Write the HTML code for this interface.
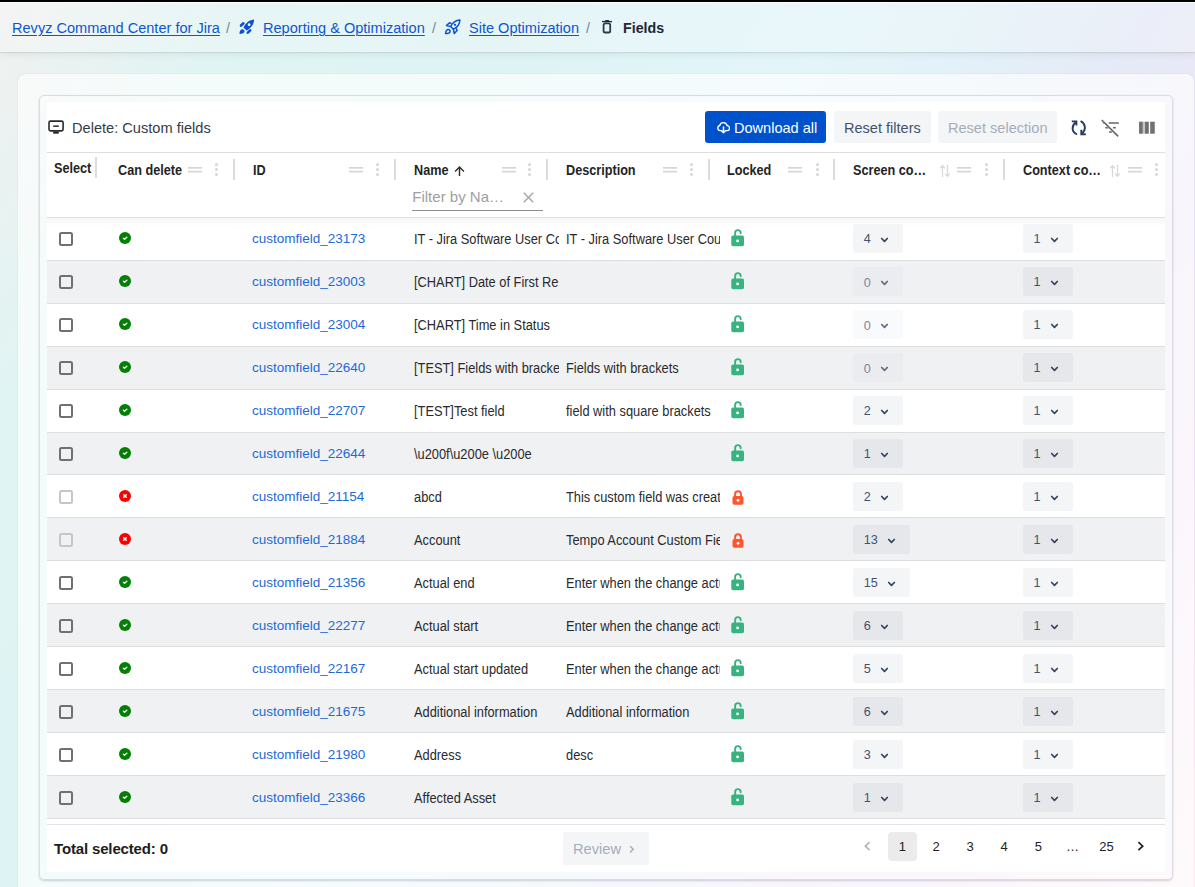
<!DOCTYPE html>
<html><head><meta charset="utf-8"><style>
*{box-sizing:border-box;margin:0;padding:0}
html,body{width:1195px;height:887px;overflow:hidden}
body{position:relative;font-family:"Liberation Sans",sans-serif;color:#292a2e;
background:linear-gradient(120deg,#f1f1f0 0%,#ebf2f1 5%,#e0f4f3 14%,#def3f4 30%,#e3f5f9 50%,#e3f1f8 58%,#e6eaf6 68%,#ebe7f6 76%,#f0e5f5 84%,#f7ebf4 92%,#fdf1f3 100%);}
.topbar{position:absolute;left:0;top:0;width:1195px;height:2px;background:#000;z-index:5}
.topw{position:absolute;left:0;top:2px;width:1195px;height:1px;background:rgba(255,255,255,.9);z-index:5}
.hdr{position:absolute;left:0;top:0;width:1195px;height:52px;background:rgba(255,255,255,.22);box-shadow:0 1px 1px rgba(40,70,70,.10),0 2px 8px rgba(40,70,70,.08)}
.bc{position:absolute;top:17.9px;height:20px;line-height:20px;font-size:15.5px;white-space:nowrap;transform:scaleX(0.939);transform-origin:0 0}
.bc a{color:#0b57d0;text-decoration:underline;text-decoration-thickness:1.3px;text-underline-offset:2px}
.bc .s{color:#7a8699}
.ic{position:absolute}
.outer{position:absolute;left:18px;top:74px;width:1176px;height:840px;border-radius:7px;background:rgba(255,255,255,.64);box-shadow:0 0 1px rgba(120,90,150,.35)}
.inner{position:absolute;left:39px;top:95px;width:1134px;height:785px;border-radius:5px;border:1px solid #d9dce6;background:rgba(255,255,255,.15);box-shadow:0 1px 2px rgba(50,60,90,.22)}
.white{position:absolute;left:47px;top:102px;width:1118px;height:770px;background:#fff;border-radius:3px}
.title{position:absolute;left:71.7px;top:118px;font-size:15.5px;line-height:20px;color:#363b45;transform:scaleX(0.942);transform-origin:0 0}
.btn{position:absolute;top:111px;height:32px;border-radius:3px;font-size:15px;line-height:33px;white-space:nowrap}
.bx{display:inline-block;transform:scaleX(0.97);transform-origin:0 0}
.b1{left:705px;width:121px;background:#0052cc;color:#fff;padding-left:28.5px}
.b2{left:834px;width:97px;background:#f4f5f7;color:#42526e;padding-left:10px}
.b3{left:938px;width:119px;background:#f4f5f7;color:#a5adba;padding-left:10.2px}
.hline{position:absolute;left:47px;width:1118px;height:1px;background:#dddee2}
.hl{position:absolute;top:160.5px;font-size:13.8px;line-height:20px;font-weight:bold;color:#242424;white-space:nowrap;transform:scaleX(0.917);transform-origin:0 0}
.dh{position:absolute;top:166px}
.kb{position:absolute;top:163.3px;width:3px;height:13px}
.kb i{display:block;width:3px;height:3px;border-radius:50%;background:#d6d6d6;margin-bottom:1.9px}
.sep{position:absolute;width:2px;background:#dcdcdc}
.si{position:absolute;top:163.5px;width:12px;height:14px;line-height:0}
.upar{position:absolute}
.flt{position:absolute;left:412.3px;top:187.8px;font-size:15px;line-height:18px;color:#a0a0a0}
.fline{position:absolute;left:412px;top:209.8px;width:131px;height:1.4px;background:#8c8c8c}
.shadow{position:absolute;left:47px;top:218px;width:1118px;height:8px;background:linear-gradient(rgba(0,0,0,.035),rgba(0,0,0,0))}
.row{position:absolute;left:47px;width:1118px;height:43px;border-top:1px solid #dedede;background:#fff}
.row.alt{background:#f0f1f3}
.row > .rc{position:absolute;left:0;width:1118px;height:43px}
.rc > div{position:absolute}
.cb{left:12px;top:14px;width:14px;height:14px;border:2px solid #707070;border-radius:2.5px}
.cb.dis{border-color:#c6c6c6}
.cd{left:72px;top:14px;width:12px;height:12px;line-height:0}
.tid{left:205px;top:-0.5px;line-height:42px;font-size:13.5px;color:#1c6ad8;white-space:nowrap}
.tn{left:366.6px;top:1px;width:145.4px;overflow:hidden;line-height:42px;font-size:13.8px;color:#292a2e;white-space:nowrap}
.sx{display:inline-block;transform:scaleX(0.93);transform-origin:0 0}
.tdsc{left:519px;top:1px;width:154px;overflow:hidden;line-height:42px;font-size:13.8px;color:#292a2e;white-space:nowrap}
.lk{left:684px;line-height:0}
.lko{top:11px;left:684px}
.lkc{top:14.3px;left:684.8px}
.sel{top:6px;height:29px;border-radius:3px;background:rgba(9,30,66,.045);font-size:12.6px;line-height:29px;color:#42526e}
.sel span{position:absolute;left:10.8px;top:0.5px}
.sel.dis{background:rgba(9,30,66,.025)}
.sel.dis span{color:#7a869a;top:1.6px}
.sel i{position:absolute;top:12.5px;width:9px;height:7px;line-height:0}
.ftline{position:absolute;left:47px;top:824px;width:1118px;height:1px;background:#e2e3e8}
.total{position:absolute;left:54px;top:838.5px;font-size:15px;letter-spacing:-0.15px;line-height:20px;font-weight:bold;color:#1d1d1d}
.review{position:absolute;left:563px;top:832px;width:86px;height:32.5px;border-radius:3px;background:#f4f5f7;color:#a5adba;font-size:15px;line-height:33px;padding-left:9.7px}
.pg{position:absolute;top:832.3px;width:28.8px;height:28.5px;line-height:29px;text-align:center;font-size:13px;color:#222;border-radius:4px}
.pg.on{background:#ebebeb}
</style></head><body>
<div class="hdr"></div>
<div class="topbar"></div><div class="topw"></div>
<div class="bc" style="left:11.5px"><a>Revyz Command Center for Jira</a></div>
<div class="bc" style="left:225.5px"><span class="s">/</span></div>
<div class="ic" style="left:234px;top:16px"><svg width="24" height="22" viewBox="0 0 24 22"><path d="M20.1 3.6 C15.8 3.9 12.3 6.3 9.4 11.4 L12.7 14.6 C17.6 11.8 19.9 8 20.1 3.6 Z" fill="#0b50d0"/><circle cx="15.1" cy="8.7" r="1.45" fill="#e4f4f6"/><path d="M7 9.5 L9.4 7.3 M13.8 16.6 L16.2 14.4" stroke="#0b50d0" stroke-width="2.6" stroke-linecap="round"/><path d="M5.4 17.9 C5.6 15.4 6.6 13.3 8.4 13.3 C9.6 13.3 10.5 14.2 10.5 15.4 C10.5 17.1 8.3 17.8 5.4 17.9 Z" fill="#0b50d0"/></svg></div>
<div class="bc" style="left:263.3px"><a>Reporting &amp; Optimization</a></div>
<div class="bc" style="left:431.5px"><span class="s">/</span></div>
<div class="ic" style="left:440px;top:16px"><svg width="24" height="22" viewBox="0 0 24 22"><path d="M19.9 4 C15.6 4.3 12.6 6.6 10.6 10.5 L13.4 13.3 C17.4 11.4 19.6 8.4 19.9 4 Z" fill="none" stroke="#0b50d0" stroke-width="1.55" stroke-linejoin="round"/><path d="M11.6 7.6 L9.5 6.8 L6.4 9.5 L10.5 10.6 M16.3 12.3 L17 14.4 L14.3 17.5 L13.3 13.4" fill="none" stroke="#0b50d0" stroke-width="1.55" stroke-linejoin="round"/><circle cx="15" cy="8.8" r="1.15" fill="#0b50d0"/><path d="M5.6 17.6 C5.8 15.5 6.7 13.6 8.3 13.6 C9.3 13.6 10.1 14.4 10.1 15.4 C10.1 16.9 8.2 17.5 5.6 17.6 Z" fill="none" stroke="#0b50d0" stroke-width="1.5" stroke-linejoin="round"/></svg></div>
<div class="bc" style="left:469.3px"><a>Site Optimization</a></div>
<div class="bc" style="left:585.5px"><span class="s">/</span></div>
<div class="ic" style="left:596px;top:16px"><svg width="22" height="22" viewBox="0 0 22 22"><path d="M6 5.6 H16" stroke="#1f2a3c" stroke-width="1.4"/><rect x="9.2" y="4" width="3.7" height="1.4" fill="#1f2a3c"/><rect x="7.6" y="7.3" width="6.6" height="9.2" rx="1.6" fill="none" stroke="#2c3a50" stroke-width="1.8"/></svg></div>
<div class="bc" style="left:623.3px;font-weight:bold;font-size:15px;transform:scaleX(0.948);color:#1f2733">Fields</div>

<div class="outer"></div>
<div class="inner"></div>
<div class="white"></div>

<svg style="position:absolute;left:45px;top:116px" width="22" height="22" viewBox="0 0 22 22"><rect x="4" y="5.1" width="14.1" height="9.75" rx="1.5" fill="none" stroke="#2b2b2b" stroke-width="1.6"/><path d="M8.2 10.15 H13.8" stroke="#2b2b2b" stroke-width="1.5"/><rect x="8.2" y="15.4" width="5.6" height="2.3" fill="#2b2b2b"/></svg>
<div class="title">Delete: Custom fields</div>
<div class="btn b1"><svg style="position:absolute;left:12px;top:10px" width="13" height="13" viewBox="0 0 13 13"><path d="M4 9.6 H3.2 A2.6 2.6 0 0 1 2.7 4.5 A3.8 3.8 0 0 1 10.1 4.6 A2.5 2.5 0 0 1 9.9 9.6 H9" stroke="#fff" stroke-width="1.4" fill="none" stroke-linecap="round"/><path d="M6.5 6 V11.8 M4.5 9.8 L6.5 11.8 L8.5 9.8" stroke="#fff" stroke-width="1.5" fill="none" stroke-linecap="round" stroke-linejoin="round"/></svg><span class="bx">Download all</span></div>
<div class="btn b2"><span class="bx">Reset filters</span></div>
<div class="btn b3"><span class="bx">Reset selection</span></div>
<svg style="position:absolute;left:1067px;top:116px" width="24" height="24" viewBox="0 0 24 24"><path d="M8.6 6.6 C4.6 9.5 4.4 15.5 9.4 18" stroke="#2b3d5c" stroke-width="1.9" fill="none" stroke-linecap="round"/><path d="M4.8 5.4 H9.4 V9.6" stroke="#2b3d5c" stroke-width="1.9" fill="none"/><path d="M14.2 5.4 C18.8 8 19 14 15.3 16.9" stroke="#2b3d5c" stroke-width="1.9" fill="none" stroke-linecap="round"/><path d="M18.8 18.3 H14.3 V13.8" stroke="#2b3d5c" stroke-width="1.9" fill="none"/></svg>
<svg style="position:absolute;left:1098px;top:116px" width="24" height="24" viewBox="0 0 24 24"><path d="M10.8 7 H20.8 M7.3 11.8 H10.5 M15 11.8 H17.8 M11 15.9 H14" stroke="#666" stroke-width="1.5"/><path d="M4.8 7 H6.4" stroke="#666" stroke-width="1.5"/><path d="M4.2 4.5 L19.7 19.9" stroke="#fff" stroke-width="2.2"/><path d="M4.2 4.5 L19.7 19.9" stroke="#666" stroke-width="1.65" stroke-linecap="round"/></svg>
<svg style="position:absolute;left:1135px;top:116px" width="24" height="24" viewBox="0 0 24 24"><rect x="4.05" y="5.7" width="3.8" height="12" fill="#707070"/><rect x="9.9" y="5.7" width="3.9" height="12" fill="#707070"/><rect x="15.2" y="5.7" width="4.55" height="12" fill="#707070"/><rect x="7.85" y="5.7" width="2.05" height="12" fill="#c4c4c4"/></svg>

<div class="hline" style="top:152px"></div>
<div class="hl" style="left:53.8px;top:158.5px">Select</div><div class="sep" style="left:95px;top:157.3px;height:21px"></div><div class="hl" style="left:118.4px">Can delete</div><svg class="dh" style="left:187.8px" width="15" height="8" viewBox="0 0 15 8"><rect x="0" y="1" width="14.1" height="1.7" fill="#d6d6d6"/><rect x="0" y="4.8" width="14.1" height="1.7" fill="#d6d6d6"/></svg><div class="kb" style="left:215.0px"><i></i><i></i><i></i></div><div class="sep" style="left:233px;top:159.3px;height:20.7px"></div><div class="hl" style="left:252.5px">ID</div><svg class="dh" style="left:348.5px" width="15" height="8" viewBox="0 0 15 8"><rect x="0" y="1" width="14.1" height="1.7" fill="#d6d6d6"/><rect x="0" y="4.8" width="14.1" height="1.7" fill="#d6d6d6"/></svg><div class="kb" style="left:376.1px"><i></i><i></i><i></i></div><div class="sep" style="left:394.3px;top:159.3px;height:20.7px"></div><div class="hl" style="left:414px">Name</div><svg class="upar" style="left:454.3px;top:165.5px" width="11" height="10" viewBox="0 0 11 10"><path d="M5.5 10 V1.3 M1.1 5.5 L5.5 1.1 L9.9 5.5" stroke="#2f2f2f" stroke-width="1.45" fill="none"/></svg><svg class="dh" style="left:501.6px" width="15" height="8" viewBox="0 0 15 8"><rect x="0" y="1" width="14.1" height="1.7" fill="#d6d6d6"/><rect x="0" y="4.8" width="14.1" height="1.7" fill="#d6d6d6"/></svg><div class="kb" style="left:528.3px"><i></i><i></i><i></i></div><div class="sep" style="left:546.4px;top:159.3px;height:20.7px"></div><div class="hl" style="left:565.8px">Description</div><svg class="dh" style="left:662.6px" width="15" height="8" viewBox="0 0 15 8"><rect x="0" y="1" width="14.1" height="1.7" fill="#d6d6d6"/><rect x="0" y="4.8" width="14.1" height="1.7" fill="#d6d6d6"/></svg><div class="kb" style="left:690.1px"><i></i><i></i><i></i></div><div class="sep" style="left:707.5px;top:159.3px;height:20.7px"></div><div class="hl" style="left:726.7px">Locked</div><svg class="dh" style="left:787.6px" width="15" height="8" viewBox="0 0 15 8"><rect x="0" y="1" width="14.1" height="1.7" fill="#d6d6d6"/><rect x="0" y="4.8" width="14.1" height="1.7" fill="#d6d6d6"/></svg><div class="kb" style="left:815.6px"><i></i><i></i><i></i></div><div class="sep" style="left:833.3px;top:159.3px;height:20.7px"></div><div class="hl" style="left:852.6px">Screen co…</div><div class="si" style="left:939px"><svg width="12" height="14" viewBox="0 0 12 14"><path d="M3.5 13 V1.8 M1.2 4.2 L3.5 1.8 L5.8 4.2 M8.5 1 V12.2 M6.2 9.8 L8.5 12.2 L10.8 9.8" stroke="#d9d9d9" stroke-width="1.3" fill="none"/></svg></div><svg class="dh" style="left:957.3px" width="15" height="8" viewBox="0 0 15 8"><rect x="0" y="1" width="14.1" height="1.7" fill="#d6d6d6"/><rect x="0" y="4.8" width="14.1" height="1.7" fill="#d6d6d6"/></svg><div class="kb" style="left:984.9px"><i></i><i></i><i></i></div><div class="sep" style="left:1003.3px;top:159.3px;height:20.7px"></div><div class="hl" style="left:1022.8px">Context co…</div><div class="si" style="left:1109.2px"><svg width="12" height="14" viewBox="0 0 12 14"><path d="M3.5 13 V1.8 M1.2 4.2 L3.5 1.8 L5.8 4.2 M8.5 1 V12.2 M6.2 9.8 L8.5 12.2 L10.8 9.8" stroke="#d9d9d9" stroke-width="1.3" fill="none"/></svg></div><svg class="dh" style="left:1127.5px" width="15" height="8" viewBox="0 0 15 8"><rect x="0" y="1" width="14.1" height="1.7" fill="#d6d6d6"/><rect x="0" y="4.8" width="14.1" height="1.7" fill="#d6d6d6"/></svg><div class="kb" style="left:1155.1px"><i></i><i></i><i></i></div><div class="flt">Filter by Na…</div><svg style="position:absolute;left:523.4px;top:191.8px" width="11" height="11" viewBox="0 0 11 11"><path d="M0.8 0.8 L10.2 10.2 M10.2 0.8 L0.8 10.2" stroke="#a6a6a6" stroke-width="1.45"/></svg><div class="fline"></div>
<div class="row" style="top:217px;height:43px"><div class="rc" style="top:0px"><div class="cb"></div><div class="cd"><svg width="12" height="12" viewBox="0 0 12 12"><circle cx="6" cy="6" r="6" fill="#038003"/><path d="M4.4 6.2 L5.6 7.3 L7.9 5.1" stroke="#fff" stroke-width="1.3" fill="none" stroke-linecap="round" stroke-linejoin="round"/></svg></div><div class="tid">customfield_23173</div><div class="tn"><span class="sx">IT - Jira Software User Course Name</span></div><div class="tdsc"><span class="sx">IT - Jira Software User Course Name</span></div><div class="lk lko"><svg width="13" height="18" viewBox="0 0 13 18"><path d="M4.15 6.8 V3.85 A2.75 2.75 0 0 1 9.65 3.85 V4.3" stroke="#36b37e" stroke-width="1.9" fill="none" stroke-linecap="round"/><rect x="0.3" y="6.5" width="12.7" height="10.8" rx="1.8" fill="#36b37e"/><circle cx="6.6" cy="11.9" r="1.45" fill="#fff"/></svg></div><div class="sel" style="left:806px;width:50px"><span>4</span><i style="left:27px"><svg width="9" height="7" viewBox="0 0 9 7"><path d="M1.7 1.5 L4.5 4.3 L7.3 1.5" stroke="#344563" stroke-width="1.75" fill="none" stroke-linecap="round" stroke-linejoin="round"/></svg></i></div><div class="sel" style="left:975.8px;width:50px"><span>1</span><i style="left:27px"><svg width="9" height="7" viewBox="0 0 9 7"><path d="M1.7 1.5 L4.5 4.3 L7.3 1.5" stroke="#344563" stroke-width="1.75" fill="none" stroke-linecap="round" stroke-linejoin="round"/></svg></i></div></div></div><div class="row alt" style="top:260px;height:43px"><div class="rc" style="top:0px"><div class="cb"></div><div class="cd"><svg width="12" height="12" viewBox="0 0 12 12"><circle cx="6" cy="6" r="6" fill="#038003"/><path d="M4.4 6.2 L5.6 7.3 L7.9 5.1" stroke="#fff" stroke-width="1.3" fill="none" stroke-linecap="round" stroke-linejoin="round"/></svg></div><div class="tid">customfield_23003</div><div class="tn"><span class="sx">[CHART] Date of First Response</span></div><div class="tdsc"><span class="sx"></span></div><div class="lk lko"><svg width="13" height="18" viewBox="0 0 13 18"><path d="M4.15 6.8 V3.85 A2.75 2.75 0 0 1 9.65 3.85 V4.3" stroke="#36b37e" stroke-width="1.9" fill="none" stroke-linecap="round"/><rect x="0.3" y="6.5" width="12.7" height="10.8" rx="1.8" fill="#36b37e"/><circle cx="6.6" cy="11.9" r="1.45" fill="#fff"/></svg></div><div class="sel dis" style="left:806px;width:50px"><span>0</span><i style="left:27px"><svg width="9" height="7" viewBox="0 0 9 7"><path d="M1.7 1.5 L4.5 4.3 L7.3 1.5" stroke="#5e6c84" stroke-width="1.75" fill="none" stroke-linecap="round" stroke-linejoin="round"/></svg></i></div><div class="sel" style="left:975.8px;width:50px"><span>1</span><i style="left:27px"><svg width="9" height="7" viewBox="0 0 9 7"><path d="M1.7 1.5 L4.5 4.3 L7.3 1.5" stroke="#344563" stroke-width="1.75" fill="none" stroke-linecap="round" stroke-linejoin="round"/></svg></i></div></div></div><div class="row" style="top:303px;height:43px"><div class="rc" style="top:0px"><div class="cb"></div><div class="cd"><svg width="12" height="12" viewBox="0 0 12 12"><circle cx="6" cy="6" r="6" fill="#038003"/><path d="M4.4 6.2 L5.6 7.3 L7.9 5.1" stroke="#fff" stroke-width="1.3" fill="none" stroke-linecap="round" stroke-linejoin="round"/></svg></div><div class="tid">customfield_23004</div><div class="tn"><span class="sx">[CHART] Time in Status</span></div><div class="tdsc"><span class="sx"></span></div><div class="lk lko"><svg width="13" height="18" viewBox="0 0 13 18"><path d="M4.15 6.8 V3.85 A2.75 2.75 0 0 1 9.65 3.85 V4.3" stroke="#36b37e" stroke-width="1.9" fill="none" stroke-linecap="round"/><rect x="0.3" y="6.5" width="12.7" height="10.8" rx="1.8" fill="#36b37e"/><circle cx="6.6" cy="11.9" r="1.45" fill="#fff"/></svg></div><div class="sel dis" style="left:806px;width:50px"><span>0</span><i style="left:27px"><svg width="9" height="7" viewBox="0 0 9 7"><path d="M1.7 1.5 L4.5 4.3 L7.3 1.5" stroke="#5e6c84" stroke-width="1.75" fill="none" stroke-linecap="round" stroke-linejoin="round"/></svg></i></div><div class="sel" style="left:975.8px;width:50px"><span>1</span><i style="left:27px"><svg width="9" height="7" viewBox="0 0 9 7"><path d="M1.7 1.5 L4.5 4.3 L7.3 1.5" stroke="#344563" stroke-width="1.75" fill="none" stroke-linecap="round" stroke-linejoin="round"/></svg></i></div></div></div><div class="row alt" style="top:346px;height:43px"><div class="rc" style="top:0px"><div class="cb"></div><div class="cd"><svg width="12" height="12" viewBox="0 0 12 12"><circle cx="6" cy="6" r="6" fill="#038003"/><path d="M4.4 6.2 L5.6 7.3 L7.9 5.1" stroke="#fff" stroke-width="1.3" fill="none" stroke-linecap="round" stroke-linejoin="round"/></svg></div><div class="tid">customfield_22640</div><div class="tn"><span class="sx">[TEST] Fields with brackets</span></div><div class="tdsc"><span class="sx">Fields with brackets</span></div><div class="lk lko"><svg width="13" height="18" viewBox="0 0 13 18"><path d="M4.15 6.8 V3.85 A2.75 2.75 0 0 1 9.65 3.85 V4.3" stroke="#36b37e" stroke-width="1.9" fill="none" stroke-linecap="round"/><rect x="0.3" y="6.5" width="12.7" height="10.8" rx="1.8" fill="#36b37e"/><circle cx="6.6" cy="11.9" r="1.45" fill="#fff"/></svg></div><div class="sel dis" style="left:806px;width:50px"><span>0</span><i style="left:27px"><svg width="9" height="7" viewBox="0 0 9 7"><path d="M1.7 1.5 L4.5 4.3 L7.3 1.5" stroke="#5e6c84" stroke-width="1.75" fill="none" stroke-linecap="round" stroke-linejoin="round"/></svg></i></div><div class="sel" style="left:975.8px;width:50px"><span>1</span><i style="left:27px"><svg width="9" height="7" viewBox="0 0 9 7"><path d="M1.7 1.5 L4.5 4.3 L7.3 1.5" stroke="#344563" stroke-width="1.75" fill="none" stroke-linecap="round" stroke-linejoin="round"/></svg></i></div></div></div><div class="row" style="top:389px;height:43px"><div class="rc" style="top:0px"><div class="cb"></div><div class="cd"><svg width="12" height="12" viewBox="0 0 12 12"><circle cx="6" cy="6" r="6" fill="#038003"/><path d="M4.4 6.2 L5.6 7.3 L7.9 5.1" stroke="#fff" stroke-width="1.3" fill="none" stroke-linecap="round" stroke-linejoin="round"/></svg></div><div class="tid">customfield_22707</div><div class="tn"><span class="sx">[TEST]Test field</span></div><div class="tdsc"><span class="sx">field with square brackets</span></div><div class="lk lko"><svg width="13" height="18" viewBox="0 0 13 18"><path d="M4.15 6.8 V3.85 A2.75 2.75 0 0 1 9.65 3.85 V4.3" stroke="#36b37e" stroke-width="1.9" fill="none" stroke-linecap="round"/><rect x="0.3" y="6.5" width="12.7" height="10.8" rx="1.8" fill="#36b37e"/><circle cx="6.6" cy="11.9" r="1.45" fill="#fff"/></svg></div><div class="sel" style="left:806px;width:50px"><span>2</span><i style="left:27px"><svg width="9" height="7" viewBox="0 0 9 7"><path d="M1.7 1.5 L4.5 4.3 L7.3 1.5" stroke="#344563" stroke-width="1.75" fill="none" stroke-linecap="round" stroke-linejoin="round"/></svg></i></div><div class="sel" style="left:975.8px;width:50px"><span>1</span><i style="left:27px"><svg width="9" height="7" viewBox="0 0 9 7"><path d="M1.7 1.5 L4.5 4.3 L7.3 1.5" stroke="#344563" stroke-width="1.75" fill="none" stroke-linecap="round" stroke-linejoin="round"/></svg></i></div></div></div><div class="row alt" style="top:432px;height:42px"><div class="rc" style="top:0px"><div class="cb"></div><div class="cd"><svg width="12" height="12" viewBox="0 0 12 12"><circle cx="6" cy="6" r="6" fill="#038003"/><path d="M4.4 6.2 L5.6 7.3 L7.9 5.1" stroke="#fff" stroke-width="1.3" fill="none" stroke-linecap="round" stroke-linejoin="round"/></svg></div><div class="tid">customfield_22644</div><div class="tn"><span class="sx">\u200f\u200e \u200e</span></div><div class="tdsc"><span class="sx"></span></div><div class="lk lko"><svg width="13" height="18" viewBox="0 0 13 18"><path d="M4.15 6.8 V3.85 A2.75 2.75 0 0 1 9.65 3.85 V4.3" stroke="#36b37e" stroke-width="1.9" fill="none" stroke-linecap="round"/><rect x="0.3" y="6.5" width="12.7" height="10.8" rx="1.8" fill="#36b37e"/><circle cx="6.6" cy="11.9" r="1.45" fill="#fff"/></svg></div><div class="sel" style="left:806px;width:50px"><span>1</span><i style="left:27px"><svg width="9" height="7" viewBox="0 0 9 7"><path d="M1.7 1.5 L4.5 4.3 L7.3 1.5" stroke="#344563" stroke-width="1.75" fill="none" stroke-linecap="round" stroke-linejoin="round"/></svg></i></div><div class="sel" style="left:975.8px;width:50px"><span>1</span><i style="left:27px"><svg width="9" height="7" viewBox="0 0 9 7"><path d="M1.7 1.5 L4.5 4.3 L7.3 1.5" stroke="#344563" stroke-width="1.75" fill="none" stroke-linecap="round" stroke-linejoin="round"/></svg></i></div></div></div><div class="row" style="top:474px;height:43px"><div class="rc" style="top:1px"><div class="cb dis"></div><div class="cd"><svg width="12" height="12" viewBox="0 0 12 12"><circle cx="6" cy="6" r="6" fill="#fa0000"/><path d="M4.7 4.7 L7.3 7.3 M7.3 4.7 L4.7 7.3" stroke="#fff" stroke-width="1.4" fill="none" stroke-linecap="round"/></svg></div><div class="tid">customfield_21154</div><div class="tn"><span class="sx">abcd</span></div><div class="tdsc"><span class="sx">This custom field was created</span></div><div class="lk lkc"><svg width="12" height="15" viewBox="0 0 12 15"><path d="M3.1 6.5 V4.2 A2.9 2.9 0 0 1 8.9 4.2 V6.5" stroke="#ff5630" stroke-width="2" fill="none"/><rect x="0.5" y="5.9" width="11" height="8.9" rx="1.8" fill="#ff5630"/><circle cx="6" cy="10.3" r="1.4" fill="#fff"/></svg></div><div class="sel" style="left:806px;width:50px"><span>2</span><i style="left:27px"><svg width="9" height="7" viewBox="0 0 9 7"><path d="M1.7 1.5 L4.5 4.3 L7.3 1.5" stroke="#344563" stroke-width="1.75" fill="none" stroke-linecap="round" stroke-linejoin="round"/></svg></i></div><div class="sel" style="left:975.8px;width:50px"><span>1</span><i style="left:27px"><svg width="9" height="7" viewBox="0 0 9 7"><path d="M1.7 1.5 L4.5 4.3 L7.3 1.5" stroke="#344563" stroke-width="1.75" fill="none" stroke-linecap="round" stroke-linejoin="round"/></svg></i></div></div></div><div class="row alt" style="top:517px;height:43px"><div class="rc" style="top:1px"><div class="cb dis"></div><div class="cd"><svg width="12" height="12" viewBox="0 0 12 12"><circle cx="6" cy="6" r="6" fill="#fa0000"/><path d="M4.7 4.7 L7.3 7.3 M7.3 4.7 L4.7 7.3" stroke="#fff" stroke-width="1.4" fill="none" stroke-linecap="round"/></svg></div><div class="tid">customfield_21884</div><div class="tn"><span class="sx">Account</span></div><div class="tdsc"><span class="sx">Tempo Account Custom Field</span></div><div class="lk lkc"><svg width="12" height="15" viewBox="0 0 12 15"><path d="M3.1 6.5 V4.2 A2.9 2.9 0 0 1 8.9 4.2 V6.5" stroke="#ff5630" stroke-width="2" fill="none"/><rect x="0.5" y="5.9" width="11" height="8.9" rx="1.8" fill="#ff5630"/><circle cx="6" cy="10.3" r="1.4" fill="#fff"/></svg></div><div class="sel" style="left:806px;width:57px"><span>13</span><i style="left:34px"><svg width="9" height="7" viewBox="0 0 9 7"><path d="M1.7 1.5 L4.5 4.3 L7.3 1.5" stroke="#344563" stroke-width="1.75" fill="none" stroke-linecap="round" stroke-linejoin="round"/></svg></i></div><div class="sel" style="left:975.8px;width:50px"><span>1</span><i style="left:27px"><svg width="9" height="7" viewBox="0 0 9 7"><path d="M1.7 1.5 L4.5 4.3 L7.3 1.5" stroke="#344563" stroke-width="1.75" fill="none" stroke-linecap="round" stroke-linejoin="round"/></svg></i></div></div></div><div class="row" style="top:560px;height:43px"><div class="rc" style="top:1px"><div class="cb"></div><div class="cd"><svg width="12" height="12" viewBox="0 0 12 12"><circle cx="6" cy="6" r="6" fill="#038003"/><path d="M4.4 6.2 L5.6 7.3 L7.9 5.1" stroke="#fff" stroke-width="1.3" fill="none" stroke-linecap="round" stroke-linejoin="round"/></svg></div><div class="tid">customfield_21356</div><div class="tn"><span class="sx">Actual end</span></div><div class="tdsc"><span class="sx">Enter when the change actually ended</span></div><div class="lk lko"><svg width="13" height="18" viewBox="0 0 13 18"><path d="M4.15 6.8 V3.85 A2.75 2.75 0 0 1 9.65 3.85 V4.3" stroke="#36b37e" stroke-width="1.9" fill="none" stroke-linecap="round"/><rect x="0.3" y="6.5" width="12.7" height="10.8" rx="1.8" fill="#36b37e"/><circle cx="6.6" cy="11.9" r="1.45" fill="#fff"/></svg></div><div class="sel" style="left:806px;width:57px"><span>15</span><i style="left:34px"><svg width="9" height="7" viewBox="0 0 9 7"><path d="M1.7 1.5 L4.5 4.3 L7.3 1.5" stroke="#344563" stroke-width="1.75" fill="none" stroke-linecap="round" stroke-linejoin="round"/></svg></i></div><div class="sel" style="left:975.8px;width:50px"><span>1</span><i style="left:27px"><svg width="9" height="7" viewBox="0 0 9 7"><path d="M1.7 1.5 L4.5 4.3 L7.3 1.5" stroke="#344563" stroke-width="1.75" fill="none" stroke-linecap="round" stroke-linejoin="round"/></svg></i></div></div></div><div class="row alt" style="top:603px;height:43px"><div class="rc" style="top:1px"><div class="cb"></div><div class="cd"><svg width="12" height="12" viewBox="0 0 12 12"><circle cx="6" cy="6" r="6" fill="#038003"/><path d="M4.4 6.2 L5.6 7.3 L7.9 5.1" stroke="#fff" stroke-width="1.3" fill="none" stroke-linecap="round" stroke-linejoin="round"/></svg></div><div class="tid">customfield_22277</div><div class="tn"><span class="sx">Actual start</span></div><div class="tdsc"><span class="sx">Enter when the change actually started</span></div><div class="lk lko"><svg width="13" height="18" viewBox="0 0 13 18"><path d="M4.15 6.8 V3.85 A2.75 2.75 0 0 1 9.65 3.85 V4.3" stroke="#36b37e" stroke-width="1.9" fill="none" stroke-linecap="round"/><rect x="0.3" y="6.5" width="12.7" height="10.8" rx="1.8" fill="#36b37e"/><circle cx="6.6" cy="11.9" r="1.45" fill="#fff"/></svg></div><div class="sel" style="left:806px;width:50px"><span>6</span><i style="left:27px"><svg width="9" height="7" viewBox="0 0 9 7"><path d="M1.7 1.5 L4.5 4.3 L7.3 1.5" stroke="#344563" stroke-width="1.75" fill="none" stroke-linecap="round" stroke-linejoin="round"/></svg></i></div><div class="sel" style="left:975.8px;width:50px"><span>1</span><i style="left:27px"><svg width="9" height="7" viewBox="0 0 9 7"><path d="M1.7 1.5 L4.5 4.3 L7.3 1.5" stroke="#344563" stroke-width="1.75" fill="none" stroke-linecap="round" stroke-linejoin="round"/></svg></i></div></div></div><div class="row" style="top:646px;height:43px"><div class="rc" style="top:1px"><div class="cb"></div><div class="cd"><svg width="12" height="12" viewBox="0 0 12 12"><circle cx="6" cy="6" r="6" fill="#038003"/><path d="M4.4 6.2 L5.6 7.3 L7.9 5.1" stroke="#fff" stroke-width="1.3" fill="none" stroke-linecap="round" stroke-linejoin="round"/></svg></div><div class="tid">customfield_22167</div><div class="tn"><span class="sx">Actual start updated</span></div><div class="tdsc"><span class="sx">Enter when the change actually started</span></div><div class="lk lko"><svg width="13" height="18" viewBox="0 0 13 18"><path d="M4.15 6.8 V3.85 A2.75 2.75 0 0 1 9.65 3.85 V4.3" stroke="#36b37e" stroke-width="1.9" fill="none" stroke-linecap="round"/><rect x="0.3" y="6.5" width="12.7" height="10.8" rx="1.8" fill="#36b37e"/><circle cx="6.6" cy="11.9" r="1.45" fill="#fff"/></svg></div><div class="sel" style="left:806px;width:50px"><span>5</span><i style="left:27px"><svg width="9" height="7" viewBox="0 0 9 7"><path d="M1.7 1.5 L4.5 4.3 L7.3 1.5" stroke="#344563" stroke-width="1.75" fill="none" stroke-linecap="round" stroke-linejoin="round"/></svg></i></div><div class="sel" style="left:975.8px;width:50px"><span>1</span><i style="left:27px"><svg width="9" height="7" viewBox="0 0 9 7"><path d="M1.7 1.5 L4.5 4.3 L7.3 1.5" stroke="#344563" stroke-width="1.75" fill="none" stroke-linecap="round" stroke-linejoin="round"/></svg></i></div></div></div><div class="row alt" style="top:689px;height:43px"><div class="rc" style="top:1px"><div class="cb"></div><div class="cd"><svg width="12" height="12" viewBox="0 0 12 12"><circle cx="6" cy="6" r="6" fill="#038003"/><path d="M4.4 6.2 L5.6 7.3 L7.9 5.1" stroke="#fff" stroke-width="1.3" fill="none" stroke-linecap="round" stroke-linejoin="round"/></svg></div><div class="tid">customfield_21675</div><div class="tn"><span class="sx">Additional information</span></div><div class="tdsc"><span class="sx">Additional information</span></div><div class="lk lko"><svg width="13" height="18" viewBox="0 0 13 18"><path d="M4.15 6.8 V3.85 A2.75 2.75 0 0 1 9.65 3.85 V4.3" stroke="#36b37e" stroke-width="1.9" fill="none" stroke-linecap="round"/><rect x="0.3" y="6.5" width="12.7" height="10.8" rx="1.8" fill="#36b37e"/><circle cx="6.6" cy="11.9" r="1.45" fill="#fff"/></svg></div><div class="sel" style="left:806px;width:50px"><span>6</span><i style="left:27px"><svg width="9" height="7" viewBox="0 0 9 7"><path d="M1.7 1.5 L4.5 4.3 L7.3 1.5" stroke="#344563" stroke-width="1.75" fill="none" stroke-linecap="round" stroke-linejoin="round"/></svg></i></div><div class="sel" style="left:975.8px;width:50px"><span>1</span><i style="left:27px"><svg width="9" height="7" viewBox="0 0 9 7"><path d="M1.7 1.5 L4.5 4.3 L7.3 1.5" stroke="#344563" stroke-width="1.75" fill="none" stroke-linecap="round" stroke-linejoin="round"/></svg></i></div></div></div><div class="row" style="top:732px;height:43px"><div class="rc" style="top:1px"><div class="cb"></div><div class="cd"><svg width="12" height="12" viewBox="0 0 12 12"><circle cx="6" cy="6" r="6" fill="#038003"/><path d="M4.4 6.2 L5.6 7.3 L7.9 5.1" stroke="#fff" stroke-width="1.3" fill="none" stroke-linecap="round" stroke-linejoin="round"/></svg></div><div class="tid">customfield_21980</div><div class="tn"><span class="sx">Address</span></div><div class="tdsc"><span class="sx">desc</span></div><div class="lk lko"><svg width="13" height="18" viewBox="0 0 13 18"><path d="M4.15 6.8 V3.85 A2.75 2.75 0 0 1 9.65 3.85 V4.3" stroke="#36b37e" stroke-width="1.9" fill="none" stroke-linecap="round"/><rect x="0.3" y="6.5" width="12.7" height="10.8" rx="1.8" fill="#36b37e"/><circle cx="6.6" cy="11.9" r="1.45" fill="#fff"/></svg></div><div class="sel" style="left:806px;width:50px"><span>3</span><i style="left:27px"><svg width="9" height="7" viewBox="0 0 9 7"><path d="M1.7 1.5 L4.5 4.3 L7.3 1.5" stroke="#344563" stroke-width="1.75" fill="none" stroke-linecap="round" stroke-linejoin="round"/></svg></i></div><div class="sel" style="left:975.8px;width:50px"><span>1</span><i style="left:27px"><svg width="9" height="7" viewBox="0 0 9 7"><path d="M1.7 1.5 L4.5 4.3 L7.3 1.5" stroke="#344563" stroke-width="1.75" fill="none" stroke-linecap="round" stroke-linejoin="round"/></svg></i></div></div></div><div class="row alt" style="top:775px;height:43px"><div class="rc" style="top:1px"><div class="cb"></div><div class="cd"><svg width="12" height="12" viewBox="0 0 12 12"><circle cx="6" cy="6" r="6" fill="#038003"/><path d="M4.4 6.2 L5.6 7.3 L7.9 5.1" stroke="#fff" stroke-width="1.3" fill="none" stroke-linecap="round" stroke-linejoin="round"/></svg></div><div class="tid">customfield_23366</div><div class="tn"><span class="sx">Affected Asset</span></div><div class="tdsc"><span class="sx"></span></div><div class="lk lko"><svg width="13" height="18" viewBox="0 0 13 18"><path d="M4.15 6.8 V3.85 A2.75 2.75 0 0 1 9.65 3.85 V4.3" stroke="#36b37e" stroke-width="1.9" fill="none" stroke-linecap="round"/><rect x="0.3" y="6.5" width="12.7" height="10.8" rx="1.8" fill="#36b37e"/><circle cx="6.6" cy="11.9" r="1.45" fill="#fff"/></svg></div><div class="sel" style="left:806px;width:50px"><span>1</span><i style="left:27px"><svg width="9" height="7" viewBox="0 0 9 7"><path d="M1.7 1.5 L4.5 4.3 L7.3 1.5" stroke="#344563" stroke-width="1.75" fill="none" stroke-linecap="round" stroke-linejoin="round"/></svg></i></div><div class="sel" style="left:975.8px;width:50px"><span>1</span><i style="left:27px"><svg width="9" height="7" viewBox="0 0 9 7"><path d="M1.7 1.5 L4.5 4.3 L7.3 1.5" stroke="#344563" stroke-width="1.75" fill="none" stroke-linecap="round" stroke-linejoin="round"/></svg></i></div></div></div>
<div class="hline" style="top:217px;background:#dedede"></div>
<div class="shadow"></div>
<div class="hline" style="top:818px;background:#dedede"></div>
<div class="ftline"></div>
<div class="total">Total selected: 0</div>
<div class="review"><span class="bx" style="transform:scaleX(0.977)">Review</span><svg style="position:absolute;left:65.5px;top:12.5px" width="6" height="9" viewBox="0 0 6 9"><path d="M1 1.2 L4.3 4.3 L1 7.4" stroke="#a5adba" stroke-width="1.4" fill="none"/></svg></div>
<svg style="position:absolute;left:863.4px;top:841px" width="8" height="11" viewBox="0 0 8 11"><path d="M6.6 1.2 L2.3 5.2 L6.6 9.2" stroke="#b3b3b3" stroke-width="1.6" fill="none"/></svg>
<div class="pg on" style="left:888px">1</div>
<div class="pg" style="left:921.7px">2</div>
<div class="pg" style="left:955.8px">3</div>
<div class="pg" style="left:989.7px">4</div>
<div class="pg" style="left:1023.9px">5</div>
<div class="pg" style="left:1058px">…</div>
<div class="pg" style="left:1092.2px">25</div>
<svg style="position:absolute;left:1137.4px;top:841px" width="8" height="11" viewBox="0 0 8 11"><path d="M1.4 1.2 L5.7 5.2 L1.4 9.2" stroke="#1f1f1f" stroke-width="1.7" fill="none"/></svg>
</body></html>
